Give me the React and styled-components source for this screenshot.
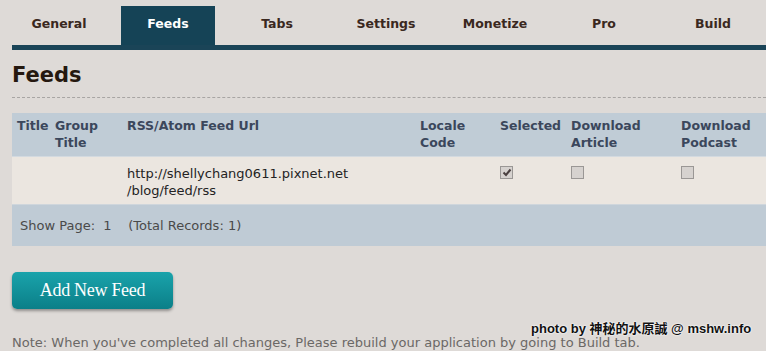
import styled, { createGlobalStyle } from "styled-components";

const GlobalStyle = createGlobalStyle`
  html, body {
    margin: 0;
    background: #dedad7;
    font-family: "DejaVu Sans", Verdana, sans-serif;
    overflow: hidden;
  }
`;

const tabs = ["General", "Feeds", "Tabs", "Settings", "Monetize", "Pro", "Build"];

const columns = [
  "Title",
  "Group Title",
  "RSS/Atom Feed Url",
  "Locale Code",
  "Selected",
  "Download Article",
  "Download Podcast",
];

const App = () => {
  return (
    <Page>
      <GlobalStyle />
      <TabBar>
        {tabs.map((t) => (
          <Tab key={t} $active={t === "Feeds"}>
            {t}
          </Tab>
        ))}
      </TabBar>

      <Heading>Feeds</Heading>
      <Rule />

      <Table>
        <HeadRow>
          {columns.map((c) => (
            <HeadCell key={c}>{c}</HeadCell>
          ))}
        </HeadRow>
        <BodyRow>
          <Cell />
          <Cell />
          <Cell>
            http://shellychang0611.pixnet.net
            <br />
            /blog/feed/rss
          </Cell>
          <Cell />
          <Cell>
            <Check $checked>
              <svg width="10" height="9" viewBox="0 0 10 9">
                <path d="M1.5 4.5 L4 7 L8.5 1.5" fill="none" stroke="#4a4040" strokeWidth="2" />
              </svg>
            </Check>
          </Cell>
          <Cell>
            <Check />
          </Cell>
          <Cell>
            <Check />
          </Cell>
        </BodyRow>
        <FootRow>
          Show Page:&nbsp; 1 &nbsp;&nbsp; (Total Records: 1)
        </FootRow>
      </Table>

      <AddButton>Add New Feed</AddButton>

      <Note>
        Note: When you've completed all changes, Please rebuild your application by going to Build tab.
      </Note>

      <Watermark>photo by 神秘的水原誠 @ mshw.info</Watermark>
    </Page>
  );
};

const Page = styled.div`
  position: relative;
  height: 351px;
  padding: 6px 0 0 12px;
  box-sizing: border-box;
`;

const TabBar = styled.div`
  display: flex;
  gap: 15px;
  border-bottom: 5px solid #1a4457;
`;

const Tab = styled.div`
  width: 94px;
  height: 39px;
  line-height: 35px;
  text-align: center;
  font-size: 12.5px;
  font-weight: bold;
  color: ${({ $active }) => ($active ? "#ffffff" : "#3a2820")};
  background: ${({ $active }) => ($active ? "#154356" : "transparent")};
`;

const Heading = styled.h2`
  margin: 12px 0 0;
  font-size: 21px;
  line-height: 26px;
  font-weight: bold;
  color: #25180f;
`;

const Rule = styled.div`
  margin-top: 9px;
  border-top: 1px dashed #a8a5a3;
`;

const Table = styled.div`
  margin-top: 15px;
  font-size: 13px;
`;

const grid = `
  display: grid;
  grid-template-columns: 38px 72px 293px 80px 71px 110px 1fr;
`;

const HeadRow = styled.div`
  ${grid}
  height: 44px;
  background: #c0ccd6;
  border-bottom: 1px solid #d3dae0;
  box-sizing: border-box;
`;

const HeadCell = styled.div`
  padding: 4px 5px 0;
  font-weight: bold;
  font-size: 12.5px;
  line-height: 17px;
  color: #3b475c;
`;

const BodyRow = styled.div`
  ${grid}
  height: 48px;
  background: #ebe6e0;
  border-bottom: 1px solid #cfd6dc;
  box-sizing: border-box;
`;

const Cell = styled.div`
  padding: 8px 5px 0;
  line-height: 17px;
  color: #232323;
`;

const Check = styled.span`
  display: flex;
  align-items: center;
  justify-content: center;
  width: 11px;
  height: 11px;
  margin-top: 1px;
  border: 1px solid #9a9795;
  background: #d6d2cf;
  svg {
    display: ${({ $checked }) => ($checked ? "block" : "none")};
  }
`;

const FootRow = styled.div`
  height: 41px;
  padding-left: 8px;
  display: flex;
  align-items: center;
  background: #bfcbd5;
  color: #4a4a4a;
`;

const AddButton = styled.button`
  display: block;
  margin-top: 26px;
  width: 161px;
  height: 37px;
  border: none;
  border-radius: 5px;
  background: linear-gradient(#1aa3ab, #0b7f88);
  box-shadow: 0 2px 3px rgba(0, 0, 0, 0.35);
  color: #ffffff;
  font-family: "Liberation Serif", "Times New Roman", serif;
  font-size: 18px;
  letter-spacing: -0.3px;
  cursor: pointer;
`;

const Note = styled.p`
  margin: 26px 0 0;
  font-size: 13px;
  line-height: 16px;
  color: #6b6866;
  white-space: nowrap;
`;

const Watermark = styled.div`
  position: absolute;
  left: 531px;
  top: 318px;
  font-family: "Liberation Sans", "Noto Sans CJK TC", sans-serif;
  font-size: 13px;
  font-weight: bold;
  color: #111111;
  text-shadow: 0 0 2px #ffffff, 0 0 2px #ffffff;
  white-space: nowrap;
`;

export default App;
